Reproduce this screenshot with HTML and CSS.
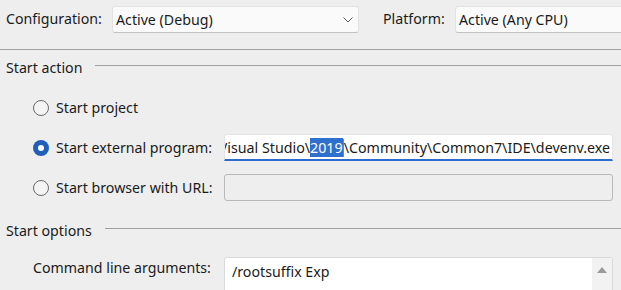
FILE: index.html
```html
<!DOCTYPE html>
<html>
<head>
<meta charset="utf-8">
<link rel="stylesheet" href="styles.css">
</head>
<body>
<div class="page">
  <div class="topbar">
    <span class="lbl cfg-lbl">Configuration:</span>
    <div class="combo cfg">
      <span class="combo-text">Active (Debug)</span>
      <svg class="chev" width="10" height="6" viewBox="0 0 10 6"><path d="M0.5 0.5 L5 5 L9.5 0.5" fill="none" stroke="#5a5a5a" stroke-width="1"/></svg>
    </div>
    <span class="lbl plat-lbl">Platform:</span>
    <div class="combo plat">
      <span class="combo-text">Active (Any CPU)</span>
    </div>
  </div>

  <div class="section-head first"><span>Start action</span><div class="rule"></div></div>

  <div class="options">
    <div class="row">
      <span class="radio"></span>
      <span class="opt-lbl">Start project</span>
    </div>
    <div class="row">
      <span class="radio checked"></span>
      <span class="opt-lbl">Start external program:</span>
      <div class="field active">
        <span class="field-text">Visual Studio\<span class="sel">2019</span><span class="caret"></span>\Community\Common7\IDE\devenv.exe</span>
      </div>
    </div>
    <div class="row">
      <span class="radio"></span>
      <span class="opt-lbl">Start browser with URL:</span>
      <div class="field disabled"></div>
    </div>
  </div>

  <div class="section-head second"><span>Start options</span><div class="rule"></div></div>

  <div class="cmd-row">
    <span class="cmd-lbl">Command line arguments:</span>
    <div class="cmd-box">
      <span class="cmd-text">/rootsuffix Exp</span>
      <div class="scroll"><span class="arrow-up"></span></div>
    </div>
  </div>
</div>
</body>
</html>
```

FILE: styles.css
```css
html, body {
  margin: 0;
  padding: 0;
  background: #eeeeee;
  overflow: hidden;
}
body {
  width: 621px;
  height: 290px;
  font-family: "Noto Sans", "Open Sans", sans-serif;
  font-size: 14.2px;
  color: #1b1b1b;
}
.page {
  width: 621px;
  overflow: hidden;
}
.topbar {
  height: 49px;
  border-bottom: 1px solid #a0a0a0;
  box-sizing: content-box;
  display: flex;
  align-items: flex-start;
  padding-left: 6px;
  white-space: nowrap;
}
.lbl {
  line-height: 20px;
  margin-top: 9px;
  flex-shrink: 0;
}
.cfg-lbl { width: 106px; }
.plat-lbl { width: 72px; margin-left: 24px; }
.combo {
  margin-top: 6px;
  height: 27px;
  box-sizing: border-box;
  background: #fafafa;
  border: 1px solid #e2e2e2;
  border-bottom-color: #c2c2c2;
  border-radius: 3px;
  display: flex;
  align-items: center;
  padding-left: 3px;
  flex-shrink: 0;
}
.cfg { width: 247px; padding-right: 5px; }
.plat { width: 200px; }
.combo-text { flex: 1; }
.chev { display: block; }

.section-head {
  display: flex;
  align-items: center;
  padding-left: 6px;
  height: 20px;
  gap: 13px;
}
.section-head .rule {
  flex: 1;
  height: 1px;
  background: #a0a0a0;
  margin-top: -3px;
}
.section-head.first { margin-top: 7px; }
.section-head.second { margin-top: 19px; }

.options {
  display: flex;
  flex-direction: column;
  gap: 13px;
  padding-top: 17px;
}
.row {
  display: flex;
  align-items: center;
  height: 27px;
  padding-left: 33px;
}
.radio {
  width: 16px;
  height: 16px;
  box-sizing: border-box;
  border-radius: 50%;
  border: 1px solid #6a6a6a;
  background: #f4f4f4;
  flex-shrink: 0;
  position: relative;
}
.radio.checked {
  border: none;
  background: #1f5fba;
}
.radio.checked::after {
  content: "";
  position: absolute;
  left: 5px;
  top: 5px;
  width: 6px;
  height: 6px;
  border-radius: 50%;
  background: #ffffff;
}
.opt-lbl {
  margin-left: 7px;
  width: 168px;
  flex-shrink: 0;
  white-space: nowrap;
}
.field {
  width: 389px;
  height: 27px;
  box-sizing: border-box;
  border-radius: 3px;
  flex-shrink: 0;
}
.field.active {
  background: #ffffff;
  border: 1px solid #e4e4e4;
  border-bottom: 2px solid #2b6ccc;
  border-radius: 3px 3px 0 0;
  overflow: hidden;
  display: flex;
  align-items: center;
  justify-content: flex-end;
  padding-right: 2px;
  white-space: nowrap;
  font-size: 14.25px;
}
.field-text {
  flex-shrink: 0;
}
.sel {
  background: #2f6fd0;
  color: #ffffff;
}
.caret {
  display: inline-block;
  width: 1px;
  height: 18px;
  background: #e06a1b;
  vertical-align: -4px;
}
.field.disabled {
  background: #eeeeee;
  border: 1px solid #b9b9b9;
}

.cmd-row {
  display: flex;
  align-items: flex-start;
  padding-left: 33px;
  margin-top: 17px;
}
.cmd-lbl {
  width: 191px;
  flex-shrink: 0;
  line-height: 20px;
  padding-top: 1px;
  white-space: nowrap;
}
.cmd-box {
  width: 389px;
  height: 33px;
  box-sizing: border-box;
  background: #ffffff;
  border: 1px solid #dadada;
  border-bottom: none;
  border-radius: 3px 3px 0 0;
  display: flex;
  flex-shrink: 0;
}
.cmd-text {
  flex: 1;
  padding-left: 7px;
  padding-top: 4px;
  line-height: 20px;
}
.scroll {
  width: 20px;
  background: #f2f2f2;
  display: flex;
  justify-content: center;
  padding-top: 9px;
}
.arrow-up {
  width: 0;
  height: 0;
  border-left: 5px solid transparent;
  border-right: 5px solid transparent;
  border-bottom: 6px solid #9a9a9a;
}
```
